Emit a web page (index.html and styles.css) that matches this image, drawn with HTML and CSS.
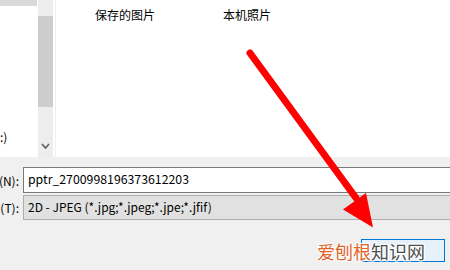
FILE: index.html
```html
<!DOCTYPE html>
<html lang="zh-CN">
<head>
<meta charset="utf-8">
<link rel="stylesheet" href="styles.css">
</head>
<body>
<div class="dialog">
  <div class="browser">
    <div class="nav">
      <div class="nav-selected"></div>
      <div class="nav-item">:)</div>
    </div>
    <div class="scrollbar">
      <div class="sb-top"></div>
      <div class="sb-thumb"></div>
      <div class="sb-track"></div>
      <svg class="sb-arrow" width="15" height="10" viewBox="0 0 15 10"><path d="M4 2 L7.5 6 L11 2" fill="none" stroke="#606060" stroke-width="1.6"/></svg>
    </div>
    <div class="divider"></div>
    <div class="files">
      <div class="file">保存的图片</div>
      <div class="file">本机照片</div>
    </div>
  </div>
  <div class="form">
    <div class="row">
      <label class="label"><span>(N):</span></label>
      <div class="input">pptr_2700998196373612203</div>
    </div>
    <div class="row row-type">
      <label class="label"><span>(T):</span></label>
      <div class="select">2D - JPEG (*.jpg;*.jpeg;*.jpe;*.jfif)</div>
    </div>
    <div class="actions">
      <div class="button"></div>
    </div>
  </div>
  <svg class="arrow" width="450" height="270" viewBox="0 0 450 270">
    <line x1="250" y1="53" x2="356" y2="198" stroke="#ff0000" stroke-width="7" stroke-linecap="round"/>
    <polygon points="343,209.5 366,193 373,227.5" fill="#ff0000"/>
  </svg>
  <div class="watermark"><span class="wm-orange">爱刨根</span><span class="wm-gray">知识网</span></div>
</div>
</body>
</html>
```

FILE: styles.css
```css
* { box-sizing: border-box; }
html, body {
  margin: 0;
  padding: 0;
  width: 450px;
  height: 270px;
  overflow: hidden;
  background: #f0f0f0;
  font-family: "Noto Sans CJK SC", "Noto Sans", sans-serif;
  font-size: 12px;
  color: #000;
}
.dialog {
  position: relative;
  width: 450px;
  height: 270px;
}
.browser {
  display: flex;
  height: 157px;
  background: #fff;
}
.nav {
  width: 38px;
  display: flex;
  flex-direction: column;
}
.nav-selected {
  height: 6px;
  width: 37px;
  background: #d9d9d9;
}
.nav-item {
  margin-top: 123px;
  padding-left: 0;
  line-height: 16px;
  font-size: 12px;
  white-space: nowrap;
}
.scrollbar {
  width: 15px;
  background: #ededed;
  display: flex;
  flex-direction: column;
}
.sb-top { height: 16px; }
.sb-thumb { height: 91px; background: #cdcdcd; }
.sb-track { flex: 1; }
.sb-arrow { display: block; margin-bottom: 5px; }
.divider {
  width: 1px;
  margin-left: 2px;
  background: #f0f0f0;
}
.files {
  flex: 1;
  display: flex;
  padding-left: 39px;
  padding-top: 6px;
}
.file {
  line-height: 18px;
  font-size: 12px;
  color: #000;
}
.file + .file { margin-left: 68px; }
.form {
  padding-top: 10px;
}
.row {
  display: flex;
  align-items: center;
  height: 26px;
}
.row-type {
  margin-top: 2px;
  height: 25px;
}
.label {
  flex: 0 0 23px;
  width: 23px;
  padding-right: 4px;
  display: flex;
  justify-content: flex-end;
  white-space: nowrap;
  font-size: 12px;
}
.label span { flex: none; }
.input {
  flex: 1;
  height: 26px;
  background: #fff;
  border: 1px solid #7a7a7a;
  border-right: none;
  padding-left: 4px;
  line-height: 23px;
  font-size: 12.3px;
  white-space: nowrap;
}
.select {
  flex: 1;
  height: 25px;
  background: #e1e1e1;
  border: 1px solid #adadad;
  border-right: none;
  padding-left: 4px;
  line-height: 22px;
  font-size: 12px;
  white-space: nowrap;
}
.actions {
  display: flex;
  justify-content: flex-end;
  padding-right: 5px;
  margin-top: 19px;
}
.button {
  width: 84px;
  height: 23px;
  background: #e5f1fb;
  border: 1px solid #0078d7;
}
.arrow {
  position: absolute;
  left: 0;
  top: 0;
  pointer-events: none;
}
.watermark {
  position: absolute;
  left: 317px;
  top: 239px;
  font-size: 18px;
  line-height: 24px;
  white-space: nowrap;
  text-shadow: 1px 0 #fff, -1px 0 #fff, 0 1px #fff, 0 -1px #fff, 1px 1px #fff, -1px -1px #fff, 1px -1px #fff, -1px 1px #fff;
}
.wm-orange { color: #e0642a; }
.wm-gray { color: #4d4d4d; }
```
